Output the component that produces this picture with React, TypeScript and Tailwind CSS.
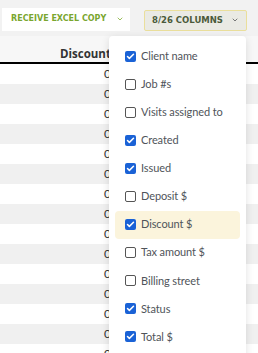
import { ChevronDown, Check } from 'lucide-react';

const columns = [
  { label: 'Client name', on: true },
  { label: 'Job #s', on: false },
  { label: 'Visits assigned to', on: false },
  { label: 'Created', on: true },
  { label: 'Issued', on: true },
  { label: 'Deposit $', on: false },
  { label: 'Discount $', on: true, active: true },
  { label: 'Tax amount $', on: false },
  { label: 'Billing street', on: false },
  { label: 'Status', on: true },
  { label: 'Total $', on: true },
];

const App = () => {
  const rows = Array.from({ length: 15 });

  return (
    <div className="w-[258px] h-[353px] overflow-hidden bg-[#f2f2f2] relative" style={{ fontFamily: 'Lato, "Open Sans", sans-serif' }}>
      {/* toolbar */}
      <div className="flex items-center h-[36px] pl-[2px] gap-[14px] pt-[2px]" style={{ fontFamily: '"DejaVu Sans", sans-serif' }}>
        <button className="flex items-center h-[23px] w-[128px] bg-white pl-[9px] gap-[10px] text-[8px] font-bold text-[#7aa630]">
          RECEIVE EXCEL COPY
          <ChevronDown className="w-[8px] h-[8px] text-[#9bbf5c]" strokeWidth={3} />
        </button>
        <button className="flex items-center justify-between h-[21px] w-[103px] mt-[2px] bg-[#eaeae4] border border-[#eadf9c] rounded-[2px] pl-[7px] pr-[7px] text-[8.5px] font-bold text-[#4a5a3a]">
          8/26 COLUMNS
          <ChevronDown className="w-[8px] h-[8px] text-[#777]" strokeWidth={3} />
        </button>
      </div>

      {/* table */}
      <div className="relative">
        <div className="h-[28px] bg-[#f7f7f7] border-b-2 border-black flex items-end">
          <div className="pl-[60px] text-[11.5px] font-bold text-[#333] whitespace-nowrap" style={{ fontFamily: '"Open Sans", sans-serif' }}>
            Discount $
          </div>
        </div>
        {rows.map((_, i) => (
          <div key={i} className={`h-[20px] flex items-center ${i % 2 === 0 ? 'bg-white' : 'bg-[#f0f0f0]'}`}>
            <div className="w-[112px] pl-[104px] text-[12px] text-[#333]">0</div>
          </div>
        ))}

        {/* columns menu */}
        <div className="absolute left-[109px] top-0 w-[137px] h-[330px] bg-white rounded-[4px] shadow-[0_2px_8px_rgba(0,0,0,0.12)] pt-[6px] px-[6px]">
          {columns.map((c) => (
            <div key={c.label} className={`h-[28.1px] flex items-center gap-[5px] pl-[10px] rounded-[4px] ${c.active ? 'bg-[#fbf4dc]' : ''}`}>
              {c.on ? (
                <span className="w-[11px] h-[11px] rounded-[2px] bg-[#1a62d6] flex items-center justify-center">
                  <Check className="w-[9px] h-[9px] text-white" strokeWidth={4} />
                </span>
              ) : (
                <span className="w-[11px] h-[11px] rounded-[2px] border border-[#555] bg-white" />
              )}
              <span className="text-[11px] tracking-[-0.1px] text-[#4f545a] whitespace-nowrap">{c.label}</span>
            </div>
          ))}
        </div>
      </div>
    </div>
  );
};

export default App;
